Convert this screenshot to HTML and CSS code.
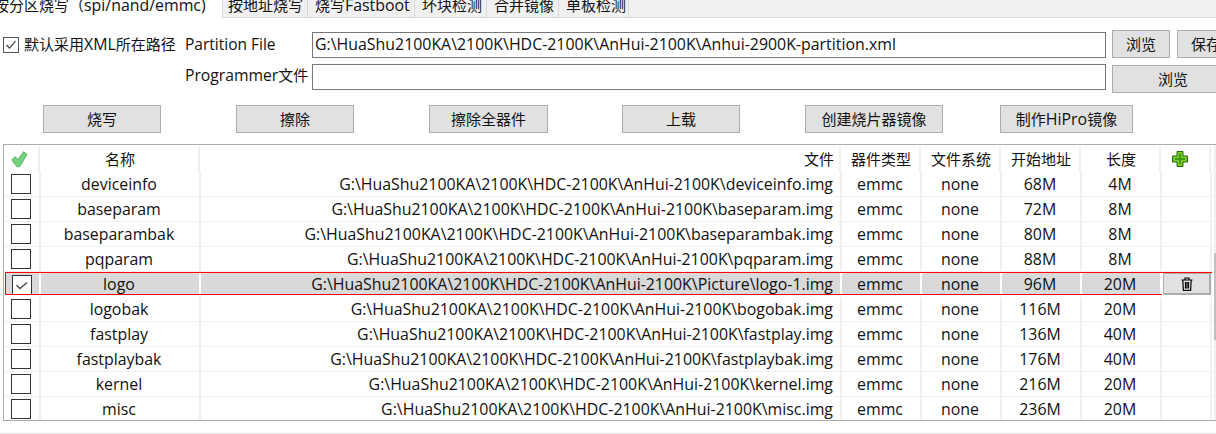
FILE: index.html
```html
<!DOCTYPE html>
<html lang="zh">
<head>
<meta charset="utf-8">
<title>烧写</title>
<link rel="stylesheet" href="styles.css">
</head>
<body>
<div class="tabs">
  <div class="tab first">按分区烧写（<span class="latin">spi/nand/emmc)</span></div>
  <div class="tab t2">按地址烧写</div>
  <div class="tab t3">烧写<span class="latin">Fastboot</span></div>
  <div class="tab t4">坏块检测</div>
  <div class="tab t4">合并镜像</div>
  <div class="tab t5">单板检测</div>
</div>
<div class="form">
  <label class="xml"><span class="cb cb-small"><svg viewBox="0 0 14 14" width="14" height="14"><path d="M2.500 7l3 3.200 6-7" fill="none" stroke="#444" stroke-width="1.200"/></svg></span><span class="xml-text">默认采用<span class="latin">XML</span>所在路径</span></label>
  <div class="lbl">Partition File</div>
  <div class="field">G:\HuaShu2100KA\2100K\HDC-2100K\AnHui-2100K\Anhui-2900K-partition.xml</div>
  <div class="btn browse">浏览</div>
  <div class="btn save">保存</div>
  <div class="lbl second"><span class="latin">Programmer</span>文件</div>
  <div class="field second">&nbsp;</div>
  <div class="btn browse2">浏览</div>
</div>
<div class="actions">
  <div class="btn a1">烧写</div>
  <div class="btn a2">擦除</div>
  <div class="btn a3">擦除全器件</div>
  <div class="btn a4">上载</div>
  <div class="btn a5">创建烧片器镜像</div>
  <div class="btn a6">制作<span class="latin">HiPro</span>镜像</div>
</div>
<div class="table">
  <div class="row head">
    <div class="c ck"><svg class="all" viewBox="0 0 17 17" width="17" height="17"><path d="M.8 9l3.200-3.500 3 3L12.500 .8 16 3.500 8.500 15.800H6z" fill="#72d47e" stroke="#4caf5c" stroke-width=".9"/></svg></div>
    <div class="c">名称</div><div class="c file">文件</div><div class="c">器件类型</div><div class="c">文件系统</div><div class="c">开始地址</div><div class="c">长度</div>
    <div class="c plus"><svg viewBox="0 0 16 16" width="16" height="16"><path d="M5 .5h6v4.500h4.500v6H11v4.500H5V11H.5V5H5z" fill="#7cc82a" stroke="#1f6b0a"/><path d="M8 3v10M3 8h10" fill="none" stroke="#3f9c12" stroke-width="2"/></svg></div>
    <div class="c end"></div>
  </div>
  <div class="row"><div class="c ck"><span class="cb"></span></div><div class="c">deviceinfo</div><div class="c file">G:\HuaShu2100KA\2100K\HDC-2100K\AnHui-2100K\deviceinfo.img</div><div class="c">emmc</div><div class="c">none</div><div class="c">68M</div><div class="c">4M</div><div class="c"></div><div class="c end"></div></div>
  <div class="row"><div class="c ck"><span class="cb"></span></div><div class="c">baseparam</div><div class="c file">G:\HuaShu2100KA\2100K\HDC-2100K\AnHui-2100K\baseparam.img</div><div class="c">emmc</div><div class="c">none</div><div class="c">72M</div><div class="c">8M</div><div class="c"></div><div class="c end"></div></div>
  <div class="row"><div class="c ck"><span class="cb"></span></div><div class="c">baseparambak</div><div class="c file">G:\HuaShu2100KA\2100K\HDC-2100K\AnHui-2100K\baseparambak.img</div><div class="c">emmc</div><div class="c">none</div><div class="c">80M</div><div class="c">8M</div><div class="c"></div><div class="c end"></div></div>
  <div class="row"><div class="c ck"><span class="cb"></span></div><div class="c">pqparam</div><div class="c file">G:\HuaShu2100KA\2100K\HDC-2100K\AnHui-2100K\pqparam.img</div><div class="c">emmc</div><div class="c">none</div><div class="c">88M</div><div class="c">8M</div><div class="c"></div><div class="c end"></div></div>
  <div class="row selected"><div class="c ck"><span class="cb"><svg viewBox="0 0 18 18" width="18" height="18"><path d="M3.500 9l3.500 3.500 7-6" fill="none" stroke="#444" stroke-width="1.300"/></svg></span></div><div class="c">logo</div><div class="c file">G:\HuaShu2100KA\2100K\HDC-2100K\AnHui-2100K\Picture\logo-1.img</div><div class="c">emmc</div><div class="c">none</div><div class="c">96M</div><div class="c">20M</div><div class="c trash"><span class="trash-btn"><svg viewBox="0 0 12 14" width="12" height="14"><path d="M.5 3h11M4 3V1h4v2M1.800 3l.6 10.300h7.200L10.200 3M4.500 5v6.500M6 5v6.500M7.500 5v6.500" fill="none" stroke="#000" stroke-width="1.200"/></svg></span></div></div>
  <div class="row"><div class="c ck"><span class="cb"></span></div><div class="c">logobak</div><div class="c file">G:\HuaShu2100KA\2100K\HDC-2100K\AnHui-2100K\bogobak.img</div><div class="c">emmc</div><div class="c">none</div><div class="c">116M</div><div class="c">20M</div><div class="c"></div><div class="c end"></div></div>
  <div class="row"><div class="c ck"><span class="cb"></span></div><div class="c">fastplay</div><div class="c file">G:\HuaShu2100KA\2100K\HDC-2100K\AnHui-2100K\fastplay.img</div><div class="c">emmc</div><div class="c">none</div><div class="c">136M</div><div class="c">40M</div><div class="c"></div><div class="c end"></div></div>
  <div class="row"><div class="c ck"><span class="cb"></span></div><div class="c">fastplaybak</div><div class="c file">G:\HuaShu2100KA\2100K\HDC-2100K\AnHui-2100K\fastplaybak.img</div><div class="c">emmc</div><div class="c">none</div><div class="c">176M</div><div class="c">40M</div><div class="c"></div><div class="c end"></div></div>
  <div class="row"><div class="c ck"><span class="cb"></span></div><div class="c">kernel</div><div class="c file">G:\HuaShu2100KA\2100K\HDC-2100K\AnHui-2100K\kernel.img</div><div class="c">emmc</div><div class="c">none</div><div class="c">216M</div><div class="c">20M</div><div class="c"></div><div class="c end"></div></div>
  <div class="row"><div class="c ck"><span class="cb"></span></div><div class="c">misc</div><div class="c file">G:\HuaShu2100KA\2100K\HDC-2100K\AnHui-2100K\misc.img</div><div class="c">emmc</div><div class="c">none</div><div class="c">236M</div><div class="c">20M</div><div class="c"></div><div class="c end"></div></div>
  <div class="track"><div class="thumb"></div></div>
</div>
<div class="foot"></div>
</body>
</html>
```
FILE: styles.css
```css
html, body { margin: 0; padding: 0; }
body {
  width: 1216px; height: 434px; overflow: hidden; background: #fff; color: #111;
  font: 15px/20px "Open Sans", "Noto Sans CJK SC", sans-serif;
}
.latin { font-size: 15.9px; }
.tabs { display: flex; height: 18px; box-sizing: border-box; background: #f0f0f0; border-bottom: 1px solid #d9d9d9; }
.tab { box-sizing: border-box; display: flex; align-items: center; height: 17px; padding: 0 0 6px 7px; border-right: 1px solid #d9d9d9; white-space: nowrap; line-height: 11px; overflow: hidden; }
.tab.first { width: 229px; height: 18px; background: #fff; padding: 0 0 7px 0; margin-left: -6px; }
.tab.t2 { width: 85px; padding-left: 5px; }
.t3 { width: 107px; }
.t4 { width: 72px; }
.t5 { width: 70px; }
.form {
  display: grid; grid-template-columns: 185px 127px 794px 71px 1fr; grid-template-rows: 26px 26px;
  row-gap: 6px; margin-top: 14px; align-items: center; white-space: nowrap;
}
.xml { display: flex; align-items: center; gap: 5px; padding-left: 3px; }
.xml-text { margin-top: -2px; }
.cb { display: inline-flex; align-items: center; justify-content: center; box-sizing: border-box; width: 20px; height: 20px; border: 1px solid #333; background: #fff; flex: none; }
.cb-small { width: 16px; height: 16px; border-color: #555; }
.lbl { font-size: 15.5px; margin-top: -2px; }
.lbl.second { grid-column: 2; grid-row: 2; font-size: 15px; margin-top: -5px; }
.lbl.second .latin { font-size: 15.7px; }
.field { grid-column: 3; box-sizing: border-box; height: 26px; border: 1px solid #777; padding: 0 2px; line-height: 22px; background: #fff; font-size: 15.9px; }
.field.second { grid-row: 2; }
.btn { box-sizing: border-box; display: flex; align-items: center; justify-content: center; height: 28px; background: #e1e1e1; border: 1px solid #adadad; white-space: nowrap; }
.browse { grid-row: 1; grid-column: 4; margin: -2px 0 0 6px; width: 58px; justify-self: start; align-self: start; }
.save { grid-row: 1; grid-column: 5; width: 58px; margin-top: -2px; align-self: start; justify-self: start; }
.browse2 { grid-row: 2; grid-column: 4 / 6; margin: 1px 0 0 6px; width: 122px; justify-self: start; align-self: start; }
.actions { height: 28px; margin-top: 15px; display: flex; }
.a1 { margin-left: 43px; width: 118px; }
.a2 { margin-left: 75px; width: 118px; }
.a3 { margin-left: 75px; width: 119px; }
.a4 { margin-left: 74px; width: 118px; }
.a5 { margin-left: 65px; width: 138px; }
.a6 { margin-left: 57px; width: 133px; }
.table { position: relative; margin: 11px 0 0 3px; height: 277px; box-sizing: border-box; border: 1px solid #ababab; border-right: 0; overflow: hidden; font-size: 15.9px; }
.row { display: grid; grid-template-columns: 37px 160px 641px 80px 80px 80px 80px 50px 1fr; height: 25px; box-sizing: border-box; border-bottom: 1px solid #f0f0f0; }
.row.head { grid-template-columns: 36px 160px 641px 80px 80px 80px 80px 50px 1fr; height: 26px; margin-top: 1px; border-bottom: 0; font-size: 15px; }
.c { display: flex; align-items: center; justify-content: center; box-sizing: border-box; padding-right: 2px; border-right: 2px solid #f0f0f0; white-space: nowrap; min-width: 0; overflow: hidden; }
.head .c { padding: 0 0 0 2px; }
.head .c.ck { padding: 0; }
.head .c.plus { padding: 0 10px 0 0; }
.head .c.file { padding: 0 5px 0 0; }
.all { margin-right: 4px; }
.c.file { justify-content: flex-end; padding-right: 7px; }
.row.selected { grid-template-columns: 35px 160px 641px 80px 80px 80px 80px 50px; width: 1207px; height: 23px; margin: 0 0 2px 1px; background: #d9d9d9; border: 1px solid #f00; border-right: 0; }
.row.selected .c { border-right-color: #fff; }
.row.selected .ck { align-items: flex-start; padding-top: 2px; }
.row.selected .c.trash { overflow: visible; padding: 0; background: #fff; border-right: 1px solid #f0f0f0; margin-bottom: -1px; justify-content: flex-end; }
.end { border-right: 0; }
.trash-btn { box-sizing: border-box; display: flex; align-items: center; justify-content: center; width: 48px; height: 22px; background: #e1e1e1; border: 1px solid #adadad; border-width: 1px 2px 2px 1px; }
.track { position: absolute; right: 0; top: 0; bottom: 0; width: 2px; background: #f0f0f0; }
.thumb { height: 87px; margin-top: 108px; background: #bfbfbf; }
.foot { height: 1px; background: #e3e3e3; margin-top: 12px; }
```
